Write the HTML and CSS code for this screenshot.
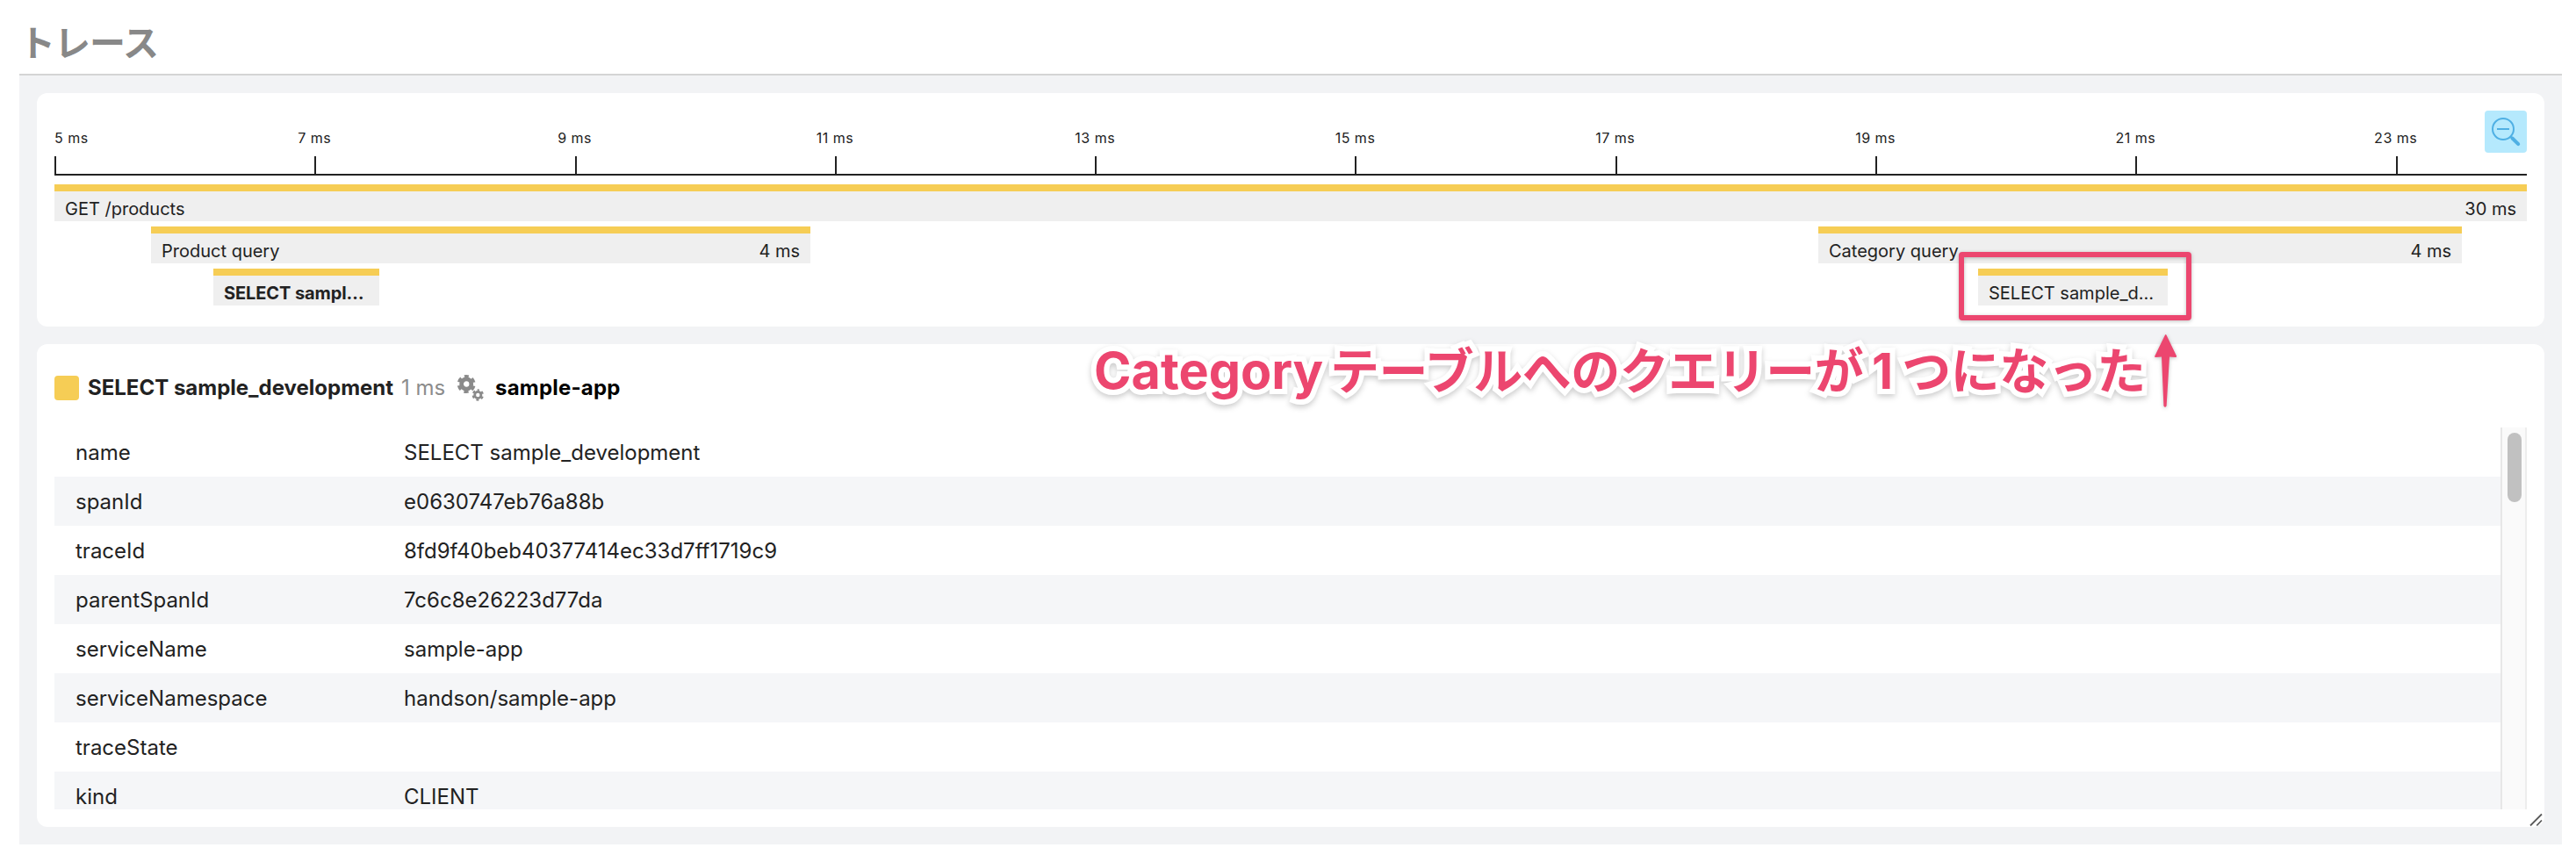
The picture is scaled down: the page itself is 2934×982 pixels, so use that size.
FILE: index.html
```html
<!DOCTYPE html>
<html lang="ja">
<head>
<meta charset="utf-8">
<title>トレース</title>
<link rel="stylesheet" href="styles.css">
</head>
<body>
<h1 class="title"><span class="title-text">トレース</span></h1>
<main class="panel">
  <section class="card timeline">
    <div class="axis">
      <div class="tick first"><span>5 ms</span></div>
      <div class="tick"><span>7 ms</span></div>
      <div class="tick"><span>9 ms</span></div>
      <div class="tick"><span>11 ms</span></div>
      <div class="tick"><span>13 ms</span></div>
      <div class="tick"><span>15 ms</span></div>
      <div class="tick"><span>17 ms</span></div>
      <div class="tick"><span>19 ms</span></div>
      <div class="tick"><span>21 ms</span></div>
      <div class="tick last"><span>23 ms</span></div>
      <button class="zoom-out" aria-label="zoom out">
        <svg width="48" height="48" viewBox="0 0 48 48" fill="none" stroke="#4fb0e4">
          <circle cx="21" cy="21" r="12" stroke-width="2"/>
          <path d="M14 21h14" stroke-width="2"/>
          <path d="M29.6 29.6l2 2" stroke-width="2.5"/>
          <path d="M31.5 31.5l6.7 6.7" stroke-width="4" stroke-linecap="round"/>
        </svg>
      </button>
    </div>
    <div class="lane"><div class="span" style="width:2816px"><span class="label">GET /products</span><span>30 ms</span></div></div>
    <div class="lane">
      <div class="span" style="margin-left:110px;width:751px"><span class="label">Product query</span><span>4 ms</span></div>
      <div class="span" style="margin-left:1148px;width:733px"><span class="label">Category query</span><span>4 ms</span></div>
    </div>
    <div class="lane">
      <div class="span selected" style="margin-left:181px;width:189px"><span class="label">SELECT sampl…</span></div>
      <div class="span" style="margin-left:1821px;width:216px"><span class="label">SELECT sample_d…</span></div>
    </div>
  </section>

  <section class="card detail">
    <header class="head">
      <i class="swatch"></i>
      <b class="name">SELECT sample_development</b>
      <span class="time">1 ms</span>
      <svg class="gears" width="30" height="30" viewBox="0 0 30 30">
        <g fill="none" stroke="#8a8a8a">
          <circle cx="10.2" cy="10.5" r="5.6" stroke-width="4.8"/>
          <circle cx="10.2" cy="10.5" r="8.9" stroke-width="3.2" stroke-dasharray="5.2 4.12" stroke-dashoffset="2.6" transform="rotate(-90 10.2 10.5)"/>
          <circle cx="23.3" cy="23" r="3.6" stroke-width="2.8"/>
          <circle cx="23.3" cy="23" r="5.6" stroke-width="2.2" stroke-dasharray="3 2.864" stroke-dashoffset="1.5" transform="rotate(-90 23.3 23)"/>
        </g>
      </svg>
      <b class="service">sample-app</b>
    </header>
    <div class="scroll">
      <dl class="rows">
        <div class="row"><dt>name</dt><dd>SELECT sample_development</dd></div>
        <div class="row"><dt>spanId</dt><dd>e0630747eb76a88b</dd></div>
        <div class="row"><dt>traceId</dt><dd>8fd9f40beb40377414ec33d7ff1719c9</dd></div>
        <div class="row"><dt>parentSpanId</dt><dd>7c6c8e26223d77da</dd></div>
        <div class="row"><dt>serviceName</dt><dd>sample-app</dd></div>
        <div class="row"><dt>serviceNamespace</dt><dd>handson/sample-app</dd></div>
        <div class="row"><dt>traceState</dt><dd></dd></div>
        <div class="row"><dt>kind</dt><dd>CLIENT</dd></div>
      </dl>
      <div class="track"><div class="thumb"></div></div>
    </div>
    <svg class="grip" width="16" height="16" viewBox="0 0 16 16" stroke="#5a5a5a" stroke-width="1.8">
      <path d="M1 14.5L14 1.5M8.300 14.500L14 8.500"/>
    </svg>
  </section>
</main>

<div class="callout-box"></div>
<div class="callout"><span class="latin">Category</span><span class="kana">テーブルへのクエリーが</span><span class="one">1</span><span class="kana">つになった</span></div>
<svg class="arrow" width="28" height="86" viewBox="0 0 28 86">
  <path d="M15.400 1.500L27 25.500Q27.300 27 26 27L19 26.500L15.600 82.500Q14 85 12.400 82.500L10 26.500L3 27Q1.800 27 2.300 25.500L14 1.500Q14.700 0.500 15.400 1.500Z" fill="#ec466f"/>
</svg>
</body>
</html>
```
FILE: styles.css
```css
* { box-sizing: border-box; }
body {
  margin: 0;
  width: 2934px;
  height: 982px;
  padding: 0 16px 0 22px;
  overflow: hidden;
  background: #fff;
  color: #222;
  font-family: Inter, "Noto Sans CJK JP", sans-serif;
}
.title {
  margin: 0;
  height: 86px;
  padding-top: 16px;
  border-bottom: 2px solid #d4d4d4;
  color: #888;
  font: 700 41px/60px "Noto Sans CJK JP", sans-serif;
}
.title-text { letter-spacing: -1px; }
.panel {
  display: flex;
  flex-direction: column;
  gap: 20px;
  height: 876px;
  padding: 20px;
  background: #f2f3f5;
}
.card { position: relative; background: #fff; border-radius: 12px; padding: 20px; }
.timeline { height: 266px; }
.axis {
  position: relative;
  display: flex;
  height: 74px;
  margin-bottom: 10px;
  padding-top: 21px;
  border-bottom: 2px solid #222;
}
.tick {
  flex: 0 0 296.3px;
  position: relative;
  display: flex;
  font-size: 16px;
  line-height: 20px;
  letter-spacing: .5px;
  background: linear-gradient(#222, #222) 0 100% / 2px 20px no-repeat;
}
.tick span { transform: translateX(-50%); white-space: nowrap; height: 20px; }
.tick.first span { transform: none; }
.tick.last { flex: 1; }
.zoom-out {
  position: absolute;
  right: 0;
  top: 0;
  width: 48px;
  height: 48px;
  padding: 0;
  border: 0;
  border-radius: 4px;
  background: #b5e9fd;
}
.zoom-out svg { display: block; }
.lane { display: flex; height: 42px; margin-bottom: 6px; }
.span {
  display: flex;
  flex: none;
  justify-content: space-between;
  padding: 5px 12px 0;
  border-top: 8px solid #f6cd55;
  background: #efefef;
  font-size: 20px;
  line-height: 30px;
  white-space: nowrap;
}
.selected { font-weight: 700; letter-spacing: -.1px; }
.detail { height: 550px; }
.head {
  display: flex;
  align-items: center;
  height: 60px;
  margin-bottom: 15px;
  font-size: 24px;
}
.head b, .time { padding-bottom: 2px; }
.swatch { width: 28px; height: 28px; border-radius: 4px; background: #f6cd55; }
.name { margin-left: 10px; width: 348px; white-space: nowrap; }
.time { margin-left: 9px; width: 64px; color: #8c8c8c; white-space: nowrap; }
.gears { flex: none; margin-right: 13px; }
.service { color: #000; letter-spacing: .2px; }
.scroll { display: flex; height: 435px; overflow: hidden; }
.rows { flex: 1; margin: 0; }
.row {
  display: flex;
  height: 56px;
  padding-left: 24px;
  font-size: 24px;
  line-height: 58px;
}
.row:nth-child(even) { background: #f5f6f8; }
.row dt { width: 374px; }
.row dd { margin: 0; }
.track {
  width: 30px;
  padding: 6px 0 0 6px;
  background: #fafafa;
  border-left: 2px solid #e7e7e7;
  border-right: 2px solid #ededed;
}
.thumb { width: 16px; height: 79px; border-radius: 8px; background: #c1c1c1; }
.grip { position: absolute; right: 1px; bottom: 0; }
.callout-box {
  position: absolute;
  left: 2231px;
  top: 287px;
  width: 265px;
  height: 78px;
  border: 6px solid #ec466f;
  border-radius: 4px;
  filter: drop-shadow(0 1px 2px rgba(0,0,0,.25));
}
.callout {
  position: absolute;
  left: 1246px;
  top: 379px;
  display: flex;
  align-items: baseline;
  line-height: 80px;
  font-size: 56px;
  font-weight: 700;
  color: #ec466f;
  white-space: nowrap;
  -webkit-text-stroke: 12px #fff;
  stroke-linejoin: round;
  paint-order: stroke fill;
  filter: drop-shadow(0 3px 3px rgba(0,0,0,.2));
}
.latin { width: 269px; font-size: 57.5px; }
.kana { font-family: "Noto Sans CJK JP", sans-serif; letter-spacing: -.5px; }
.one { width: 44px; text-align: center; }
.arrow { position: absolute; left: 2452px; top: 380px; filter: drop-shadow(0 1px 2px rgba(0,0,0,.25)); }
```
